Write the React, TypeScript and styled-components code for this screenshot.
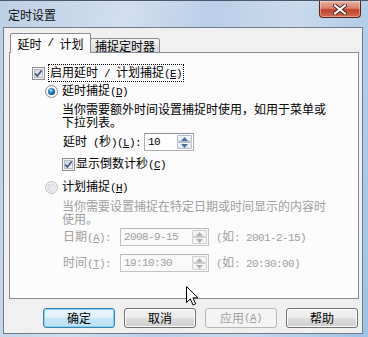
import styled, { createGlobalStyle } from "styled-components";

const GlobalStyle = createGlobalStyle`
  html, body {
    margin: 0;
    padding: 0;
    width: 368px;
    height: 337px;
    overflow: hidden;
  }
  body {
    font-family: "Noto Sans CJK SC", "Liberation Sans", sans-serif;
    font-size: 12px;
    color: #000;
  }
`;

const Window = styled.div`
  position: relative;
  width: 368px;
  height: 337px;
  box-sizing: border-box;
  display: flex;
  flex-direction: column;
  border-top: 1px solid #4a5868;
  background: linear-gradient(100deg, #bcd0e6 0%, #d0def0 30%, #bad0e8 50%, #c9daee 70%, #9cc3e6 100%);
`;

const TitleBar = styled.div`
  height: 26px;
  flex-shrink: 0;
  display: flex;
  align-items: flex-start;
`;

const Title = styled.div`
  padding: 7px 0 0 8px;
  line-height: 14px;
  color: #111;
`;

const CloseButton = styled.div`
  margin-left: auto;
  margin-right: 7px;
  width: 42px;
  height: 17px;
  box-sizing: border-box;
  border: 1px solid #5a2418;
  border-top: none;
  border-radius: 0 0 4px 4px;
  background: linear-gradient(180deg, #e8b3a3 0%, #d7806b 45%, #c1432c 55%, #d56a4f 100%);
  box-shadow: inset 0 0 0 1px rgba(255, 220, 210, 0.45);
  display: flex;
  align-items: center;
  justify-content: center;
`;

const Client = styled.div`
  flex: 1;
  margin: 0 5px 3px 3px;
  background: #f0f0f0;
  border: 1px solid #6d7b8c;
  display: flex;
  flex-direction: column;
`;

const TabStrip = styled.div`
  height: 25px;
  margin: 0 3px -1px 5px;
  display: flex;
  align-items: flex-end;
  position: relative;
  z-index: 1;
`;

const Tab = styled.div<{ $active?: boolean }>`
  box-sizing: border-box;
  display: flex;
  align-items: center;
  justify-content: center;
  border: 1px solid #898c95;
  border-radius: 2px 2px 0 0;
  line-height: 13px;
  white-space: pre;
  ${(p) =>
    p.$active
      ? `
    width: 81px;
    height: 20px;
    margin-left: 1px;
    border-bottom: none;
    background: #fcfcfc;
  `
      : `
    width: 70px;
    height: 15px;
    margin-left: -1px;
    background: linear-gradient(180deg, #f4f4f4 0%, #e6e6e6 50%, #d9d9d9 100%);
  `}
`;

const Panel = styled.div`
  box-sizing: border-box;
  height: 247px;
  margin: 0 3px 0 5px;
  border: 1px solid #898c95;
  background: #fcfcfc;
  display: flex;
  flex-direction: column;
`;

const Row = styled.div<{ $top: number; $indent: number; $h?: number }>`
  display: flex;
  align-items: center;
  margin-top: ${(p) => p.$top}px;
  padding-left: ${(p) => p.$indent}px;
  height: ${(p) => p.$h ?? 14}px;
  line-height: 14px;
`;

const Label = styled.span<{ $disabled?: boolean; $gap?: number; $w?: number }>`
  color: ${(p) => (p.$disabled ? "#a0a0a0" : "#000")};
  margin-left: ${(p) => p.$gap ?? 0}px;
  ${(p) => (p.$w ? `width: ${p.$w}px; flex-shrink: 0;` : "")}
  white-space: pre;
`;

const FocusLabel = styled.span`
  margin-left: 3px;
  padding: 0 1px;
  border: 1px dotted #000;
  white-space: pre;
`;

/* half-width latin, like the bitmap font of the original */
const Lat = styled.span`
  font-family: "Liberation Mono", "DejaVu Sans Mono", monospace;
  font-size: 11px;
  letter-spacing: -0.6px;
`;

const U = styled.span`
  text-decoration: underline;
`;

const Desc = styled.div<{ $top: number; $disabled?: boolean }>`
  margin-top: ${(p) => p.$top}px;
  padding-left: 52px;
  line-height: 13px;
  color: ${(p) => (p.$disabled ? "#a0a0a0" : "#000")};
  white-space: nowrap;
`;

const TextBox = styled.div<{ $w: number; $disabled?: boolean }>`
  box-sizing: border-box;
  width: ${(p) => p.$w}px;
  height: 18px;
  display: flex;
  border: 1px solid ${(p) => (p.$disabled ? "#c4c4c4" : "#abadb3")};
  border-top-color: ${(p) => (p.$disabled ? "#b8b8b8" : "#8e9299")};
  background: ${(p) => (p.$disabled ? "#fafafa" : "#fff")};
  flex-shrink: 0;
`;

const Value = styled.span<{ $disabled?: boolean }>`
  flex: 1;
  padding-left: 3px;
  font-family: "Liberation Mono", "DejaVu Sans Mono", monospace;
  font-size: 11px;
  letter-spacing: -0.6px;
  line-height: 16px;
  color: ${(p) => (p.$disabled ? "#a0a0a0" : "#000")};
`;

const Spin = styled.div`
  width: 15px;
  padding: 1px 1px 1px 0;
  display: flex;
  flex-direction: column;
`;

const SpinButton = styled.div<{ $disabled?: boolean }>`
  flex: 1;
  box-sizing: border-box;
  border: 1px solid ${(p) => (p.$disabled ? "#cfcfcf" : "#b4bccb")};
  border-radius: 1px;
  background: ${(p) =>
    p.$disabled ? "#f4f4f4" : "linear-gradient(180deg, #f7f9fb 0%, #dfe5ee 100%)"};
  display: flex;
  align-items: center;
  justify-content: center;
`;

const Hint = styled.span`
  margin-left: 7px;
  color: #a0a0a0;
  white-space: pre;
`;

const ButtonRow = styled.div`
  display: flex;
  gap: 9px;
  margin-top: 9px;
  padding-left: 39px;
`;

const Button = styled.div<{ $default?: boolean; $disabled?: boolean }>`
  box-sizing: border-box;
  width: 72px;
  height: 20px;
  display: flex;
  align-items: center;
  justify-content: center;
  border-radius: 3px;
  line-height: 14px;
  border: 1px solid ${(p) => (p.$default ? "#3c7fb1" : p.$disabled ? "#b5b8bb" : "#707070")};
  color: ${(p) => (p.$disabled ? "#a0a0a0" : "#000")};
  background: ${(p) =>
    p.$disabled
      ? "#f4f4f4"
      : p.$default
      ? "linear-gradient(180deg, #eaf6fd 0%, #dff0fb 50%, #c6e6f9 50%, #bde0f6 100%)"
      : "linear-gradient(180deg, #f2f2f2 0%, #ebebeb 50%, #dddddd 50%, #cfcfcf 100%)"};
  box-shadow: ${(p) =>
    p.$default ? "inset 0 0 0 1px #7fd4f7" : p.$disabled ? "none" : "inset 0 0 0 1px #fcfcfc"};
`;

const Cursor = styled.svg`
  position: absolute;
  left: 186px;
  top: 285px;
`;

function CheckIcon() {
  return (
    <svg width="13" height="13" viewBox="0 0 13 13" style={{ flexShrink: 0 }}>
      <defs>
        <linearGradient id="cbIn" x1="0" y1="0" x2="1" y2="1">
          <stop offset="0" stopColor="#cbcfd5" />
          <stop offset="1" stopColor="#f7f7f7" />
        </linearGradient>
      </defs>
      <rect x="0.5" y="0.5" width="12" height="12" fill="#f4f4f4" stroke="#8e8f8f" />
      <rect x="2.5" y="2.5" width="8" height="8" fill="url(#cbIn)" stroke="#b9bdc3" />
      <path d="M3.2 6.6 L5.4 9 L9.6 3.4" fill="none" stroke="#3f5787" strokeWidth="1.7" />
    </svg>
  );
}

function RadioIcon({ checked, disabled }: { checked?: boolean; disabled?: boolean }) {
  return (
    <svg width="13" height="13" viewBox="0 0 13 13" style={{ flexShrink: 0 }}>
      <defs>
        <radialGradient id="rbOn" cx="0.4" cy="0.35" r="0.7">
          <stop offset="0" stopColor="#b6e3fb" />
          <stop offset="0.45" stopColor="#2f86c8" />
          <stop offset="1" stopColor="#0d4784" />
        </radialGradient>
        <linearGradient id="rbOff" x1="0" y1="0" x2="1" y2="1">
          <stop offset="0" stopColor="#d8d8d8" />
          <stop offset="1" stopColor="#f8f8f8" />
        </linearGradient>
      </defs>
      <circle cx="6.5" cy="6.5" r="6" fill="#f4f4f4" stroke={disabled ? "#bdbdbd" : "#8e8f8f"} />
      {checked ? (
        <circle cx="6.5" cy="6.5" r="3.6" fill="url(#rbOn)" />
      ) : (
        <circle cx="6.5" cy="6.5" r="4" fill="url(#rbOff)" stroke="#d4d4d4" strokeWidth="0.8" />
      )}
    </svg>
  );
}

function Arrow({ up, disabled }: { up?: boolean; disabled?: boolean }) {
  return (
    <svg width="7" height="4" viewBox="0 0 7 4">
      <path d={up ? "M0 4 L3.5 0 L7 4 Z" : "M0 0 L3.5 4 L7 0 Z"} fill={disabled ? "#b0b0b0" : "#4d6fa8"} />
    </svg>
  );
}

function SpinBox({ disabled }: { disabled?: boolean }) {
  return (
    <Spin>
      <SpinButton $disabled={disabled}>
        <Arrow up disabled={disabled} />
      </SpinButton>
      <SpinButton $disabled={disabled}>
        <Arrow disabled={disabled} />
      </SpinButton>
    </Spin>
  );
}

export default function App() {
  return (
    <Window>
      <GlobalStyle />
      <TitleBar>
        <Title>定时设置</Title>
        <CloseButton>
          <svg width="14" height="11" viewBox="0 0 14 11">
            <path d="M2 1.5 L12 9.5 M12 1.5 L2 9.5" stroke="#4a2a22" strokeWidth="4" strokeLinecap="square" />
            <path d="M2 1.5 L12 9.5 M12 1.5 L2 9.5" stroke="#ffffff" strokeWidth="2" strokeLinecap="square" />
          </svg>
        </CloseButton>
      </TitleBar>

      <Client>
        <TabStrip>
          <Tab $active>
            延时<Lat> / </Lat>计划
          </Tab>
          <Tab>捕捉定时器</Tab>
        </TabStrip>

        <Panel>
          <Row $top={13} $indent={22}>
            <CheckIcon />
            <FocusLabel>
              启用延时<Lat> / </Lat>计划捕捉<Lat>(<U>E</U>)</Lat>
            </FocusLabel>
          </Row>

          <Row $top={4} $indent={35}>
            <RadioIcon checked />
            <Label $gap={4}>
              延时捕捉<Lat>(<U>D</U>)</Lat>
            </Label>
          </Row>
          <Desc $top={4}>
            当你需要额外时间设置捕捉时使用，如用于菜单或
            <br />
            下拉列表。
          </Desc>

          <Row $top={5} $indent={53} $h={18}>
            <Label $w={81}>
              延时<Lat> (</Lat>秒<Lat>)(<U>L</U>):</Lat>
            </Label>
            <TextBox $w={50}>
              <Value>10</Value>
              <SpinBox />
            </TextBox>
          </Row>

          <Row $top={6} $indent={52}>
            <CheckIcon />
            <Label $gap={1}>
              显示倒数计秒<Lat>(<U>C</U>)</Lat>
            </Label>
          </Row>

          <Row $top={9} $indent={35}>
            <RadioIcon disabled />
            <Label $gap={4}>
              计划捕捉<Lat>(<U>H</U>)</Lat>
            </Label>
          </Row>
          <Desc $top={5} $disabled>
            当你需要设置捕捉在特定日期或时间显示的内容时
            <br />
            使用。
          </Desc>

          <Row $top={3} $indent={53} $h={18}>
            <Label $disabled $w={57}>
              日期<Lat>(<U>A</U>):</Lat>
            </Label>
            <TextBox $w={89} $disabled>
              <Value $disabled>2008-9-15</Value>
              <SpinBox disabled />
            </TextBox>
            <Hint>
              <Lat>(</Lat>如<Lat>: 2001-2-15)</Lat>
            </Hint>
          </Row>

          <Row $top={8} $indent={53} $h={18}>
            <Label $disabled $w={57}>
              时间<Lat>(<U>T</U>):</Lat>
            </Label>
            <TextBox $w={89} $disabled>
              <Value $disabled>19:10:30</Value>
              <SpinBox disabled />
            </TextBox>
            <Hint>
              <Lat>(</Lat>如<Lat>: 20:30:00)</Lat>
            </Hint>
          </Row>
        </Panel>

        <ButtonRow>
          <Button $default>确定</Button>
          <Button>取消</Button>
          <Button $disabled>
            应用<Lat>(<U>A</U>)</Lat>
          </Button>
          <Button>帮助</Button>
        </ButtonRow>
      </Client>

      <Cursor width="13" height="21" viewBox="0 0 13 21">
        <path
          d="M0.5 0.5 L0.5 16.5 L4.3 12.8 L7 19 L9.6 17.9 L7 11.8 L12 11.8 Z"
          fill="#fff"
          stroke="#000"
          strokeWidth="1"
          strokeLinejoin="miter"
        />
      </Cursor>
    </Window>
  );
}
